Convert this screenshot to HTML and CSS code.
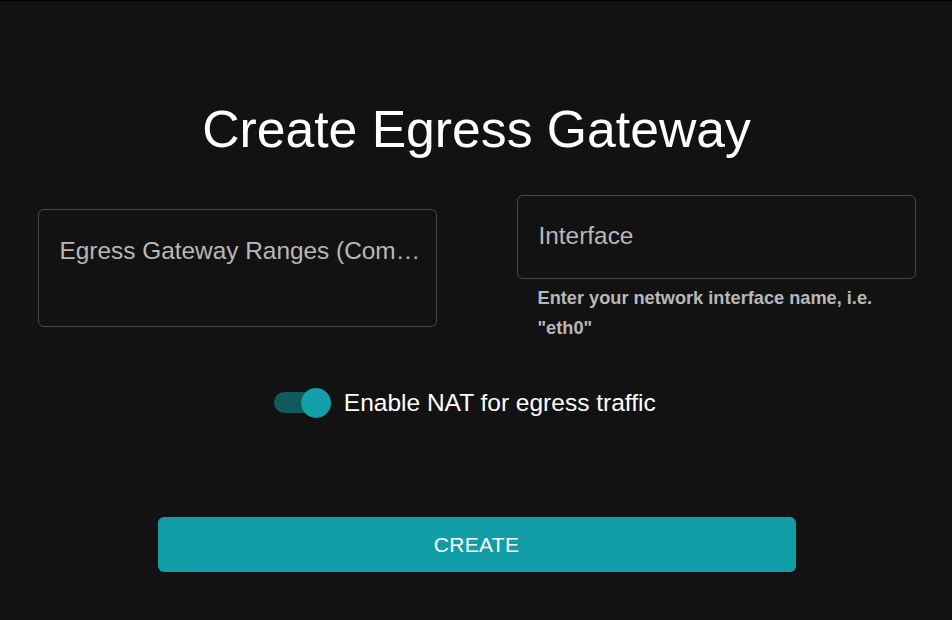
FILE: index.html
```html
<!DOCTYPE html>
<html lang="en">
<head>
<meta charset="utf-8">
<title>Create Egress Gateway</title>
<link rel="stylesheet" href="styles.css">
</head>
<body>
<main class="page">
  <h1 class="title">Create Egress Gateway</h1>
  <div class="fields">
    <div class="col">
      <div class="field field-multi">
        <div class="field-label">Egress Gateway Ranges (Comma separated)</div>
      </div>
    </div>
    <div class="col">
      <div class="field field-single">
        <div class="field-label">Interface</div>
      </div>
      <p class="helper">Enter your network interface name, i.e. "eth0"</p>
    </div>
  </div>
  <label class="toggle-row">
    <span class="switch">
      <span class="track"></span>
      <span class="thumb"></span>
    </span>
    <span class="toggle-label">Enable NAT for egress traffic</span>
  </label>
  <button class="create-btn" type="button">CREATE</button>
</main>
</body>
</html>
```

FILE: styles.css
```css
html, body {
  margin: 0;
  padding: 0;
  background: #121212;
}
body {
  border-top: 1px solid #000;
  font-family: "Liberation Sans", Arial, sans-serif;
  color: #fff;
  height: 619px;
  overflow: hidden;
}
.page {
  display: flex;
  flex-direction: column;
  align-items: center;
  padding-left: 1px;
}
.title {
  margin: 97px 0 0;
  font-size: 51.7px;
  line-height: 63px;
  font-weight: 400;
  color: #fff;
}
.fields {
  margin-top: 34px;
  width: 878px;
  display: grid;
  grid-template-columns: 399px 399px;
  column-gap: 80px;
  align-items: center;
}
.col {
  display: flex;
  flex-direction: column;
}
.field {
  box-sizing: border-box;
  border: 1px solid #474747;
  border-radius: 6px;
  padding: 23px 14px 0 21px;
}
.field-multi {
  height: 118px;
  margin-top: -2px;
  padding-top: 24px;
}
.field-single {
  height: 84px;
}
.field-label {
  font-size: 24.4px;
  line-height: 34.5px;
  color: #b8b8b8;
  white-space: nowrap;
  overflow: hidden;
  text-overflow: ellipsis;
  max-width: 362px;
}
.helper {
  margin: 4px 21px 0;
  font-size: 18.2px;
  line-height: 30px;
  font-weight: 700;
  color: #b8b8b8;
}
.toggle-row {
  margin-top: 31px;
  display: flex;
  align-items: center;
}
.switch {
  position: relative;
  width: 87px;
  height: 57px;
  margin-left: -16.5px;
}
.track {
  position: absolute;
  left: 17px;
  top: 18px;
  width: 53px;
  height: 21px;
  border-radius: 11px;
  background: #119ea6;
  opacity: 0.5;
}
.thumb {
  position: absolute;
  left: 44px;
  top: 13.5px;
  width: 30px;
  height: 30px;
  border-radius: 50%;
  background: #11a0a7;
  box-shadow: 0 2px 1px -1px rgba(0,0,0,0.2), 0 1px 1px 0 rgba(0,0,0,0.14), 0 1px 3px 0 rgba(0,0,0,0.12);
}
.toggle-label {
  font-size: 24.5px;
  line-height: 36px;
  margin-right: 24px;
  margin-left: 0;
}
.create-btn {
  margin-top: 86px;
  width: 638px;
  height: 55px;
  border: none;
  border-radius: 6px;
  background: #119da5;
  color: #fff;
  font-family: "Liberation Sans", Arial, sans-serif;
  font-size: 21px;
  font-weight: 400;
  letter-spacing: 0.3px;
  cursor: pointer;
}
```
